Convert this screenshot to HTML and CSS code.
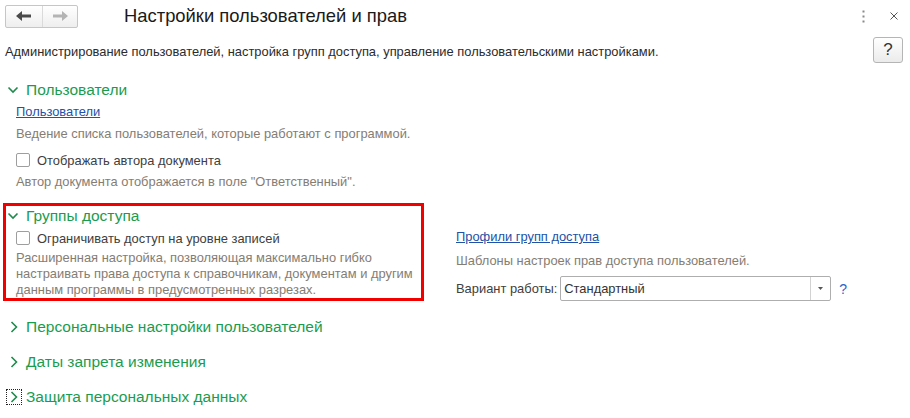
FILE: index.html
```html
<!DOCTYPE html>
<html lang="ru">
<head>
<meta charset="utf-8">
<title>Настройки пользователей и прав</title>
<link rel="stylesheet" href="styles.css">
</head>
<body>
<header class="topbar">
  <div class="nav">
    <button class="nav-btn back" type="button" aria-label="Назад">
      <svg width="16" height="10" viewBox="0 0 16 10"><path d="M0 5 L6 0 L6 3.5 L15 3.5 L15 6.5 L6 6.5 L6 10 Z" fill="#4a4a4a"/></svg>
    </button>
    <button class="nav-btn fwd" type="button" aria-label="Вперёд">
      <svg width="16" height="10" viewBox="0 0 16 10"><path d="M16 5 L10 0 L10 3.5 L1 3.5 L1 6.5 L10 6.5 L10 10 Z" fill="#b4b4b4"/></svg>
    </button>
  </div>
  <h1 class="title">Настройки пользователей и прав</h1>
  <div class="win-actions">
    <svg class="more" width="3" height="13" viewBox="0 0 3 13"><rect x="0.5" y="0.5" width="2" height="2" fill="#8a8a8a"/><rect x="0.5" y="5.5" width="2" height="2" fill="#8a8a8a"/><rect x="0.5" y="10.5" width="2" height="2" fill="#8a8a8a"/></svg>
    <svg class="close" width="8" height="8" viewBox="0 0 8 8"><path d="M0.5 0.5 L7.5 7.5 M7.5 0.5 L0.5 7.5" stroke="#555" stroke-width="1"/></svg>
  </div>
</header>

<div class="intro">
  <p class="intro-text">Администрирование пользователей, настройка групп доступа, управление пользовательскими настройками.</p>
  <button class="help" type="button">?</button>
</div>

<section class="group users">
  <div class="group-head">
    <span class="chev"><svg width="16" height="16" viewBox="0 0 16 16"><polyline points="2.5,5.5 7,10 11.5,5.5" fill="none" stroke="#1f8a4c" stroke-width="1.6"/></svg></span>
    <span>Пользователи</span>
  </div>
  <div class="group-body">
    <a class="link" href="#">Пользователи</a>
    <p class="note">Ведение списка пользователей, которые работают с программой.</p>
    <label class="check"><span class="box"></span>Отображать автора документа</label>
    <p class="note note-tight">Автор документа отображается в поле "Ответственный".</p>
  </div>
</section>

<section class="group access">
  <div class="access-main">
    <div class="group-head">
      <span class="chev"><svg width="16" height="16" viewBox="0 0 16 16"><polyline points="2.5,5.5 7,10 11.5,5.5" fill="none" stroke="#1f8a4c" stroke-width="1.6"/></svg></span>
      <span>Группы доступа</span>
    </div>
    <label class="check"><span class="box"></span>Ограничивать доступ на уровне записей</label>
    <p class="desc">Расширенная настройка, позволяющая максимально гибко<br>настраивать права доступа к справочникам, документам и другим<br>данным программы в предусмотренных разрезах.</p>
  </div>
  <div class="access-side">
    <a class="link" href="#">Профили групп доступа</a>
    <p class="note side-note">Шаблоны настроек прав доступа пользователей.</p>
    <div class="mode">
      <span class="mode-label">Вариант работы:</span>
      <div class="select">
        <span class="select-value">Стандартный</span>
        <span class="select-btn"><svg width="5" height="3" viewBox="0 0 5 3"><path d="M0 0 L5 0 L2.5 3 Z" fill="#555"/></svg></span>
      </div>
      <span class="mode-help">?</span>
    </div>
  </div>
</section>

<section class="group collapsed first">
  <div class="group-head">
    <span class="chev"><svg width="16" height="16" viewBox="0 0 16 16"><polyline points="5.5,3 10.5,8 5.5,13" fill="none" stroke="#1f8a4c" stroke-width="1.6"/></svg></span>
    <span>Персональные настройки пользователей</span>
  </div>
</section>

<section class="group collapsed">
  <div class="group-head">
    <span class="chev"><svg width="16" height="16" viewBox="0 0 16 16"><polyline points="5.5,3 10.5,8 5.5,13" fill="none" stroke="#1f8a4c" stroke-width="1.6"/></svg></span>
    <span>Даты запрета изменения</span>
  </div>
</section>

<section class="group collapsed">
  <div class="group-head">
    <span class="chev focused"><svg width="16" height="16" viewBox="0 0 16 16"><polyline points="5.5,3 10.5,8 5.5,13" fill="none" stroke="#1f8a4c" stroke-width="1.6"/></svg></span>
    <span>Защита персональных данных</span>
  </div>
</section>
</body>
</html>
```

FILE: styles.css
```css
* { box-sizing: border-box; }

body {
  margin: 0;
  font-family: "Liberation Sans", Arial, sans-serif;
  font-size: 12.9px;
  color: #333;
  background: #fff;
}

.topbar {
  display: flex;
  align-items: center;
  height: 32px;
  padding: 0 12px 0 5px;
}

.nav {
  display: flex;
  width: 73px;
  height: 23px;
  border: 1px solid #c6c6c6;
  border-radius: 2px;
  background: linear-gradient(#ffffff, #eeeeee);
}

.nav-btn {
  display: flex;
  align-items: center;
  justify-content: center;
  height: 100%;
  padding: 0;
  border: 0;
  background: transparent;
}

.nav-btn.back {
  width: 37px;
  border-right: 1px solid #dadada;
}

.nav-btn.fwd { flex: 1; }

.title {
  margin: 0 0 0 46px;
  font-size: 18.4px;
  font-weight: normal;
  line-height: 22px;
  color: #1a1a1a;
}

.win-actions {
  display: flex;
  align-items: center;
  gap: 25px;
  margin-left: auto;
}

.intro {
  display: flex;
  align-items: center;
  justify-content: space-between;
  height: 26px;
  margin-top: 5px;
  padding: 0 7px 0 5px;
}

.intro-text {
  margin: 2px 0 0;
  color: #2b2b2b;
}

.help {
  width: 30px;
  height: 26px;
  padding: 0;
  border: 1px solid #b5b5b5;
  border-radius: 3px;
  background: linear-gradient(#ffffff, #ebebeb);
  font-family: "Liberation Sans", Arial, sans-serif;
  font-size: 17px;
  color: #333;
}

.group-head {
  display: flex;
  align-items: center;
  height: 20px;
  padding-left: 6px;
  font-size: 15.5px;
  color: #1a9c4f;
}

.chev {
  display: flex;
  width: 16px;
  height: 16px;
  margin-right: 4px;
  flex: none;
}

.chev.focused { outline: 1px dotted #222; outline-offset: -1px; }

.users { margin-top: 17px; }

.group-body { padding-left: 16px; }

.link {
  display: block;
  width: fit-content;
  margin-top: 3px;
  line-height: 18px;
  color: #2152a8;
  text-decoration: underline;
}

.note {
  margin: 4px 0 0;
  line-height: 18px;
  color: #857d73;
}

.note-tight { margin-top: 3px; }

.check {
  display: flex;
  align-items: center;
  gap: 7px;
  height: 20px;
  margin-top: 7px;
  color: #404040;
}

.box {
  width: 14px;
  height: 14px;
  border: 1px solid #9e9e9e;
  border-radius: 2px;
  background: #fff;
  flex: none;
}

.access {
  display: flex;
  margin-top: 12px;
}

.access-main {
  width: 421px;
  margin-left: 3px;
  border: 3px solid #f20000;
}

.access-main .group-head { padding-left: 0; }

.access-main .check {
  margin-top: 2px;
  padding-left: 10px;
}

.desc {
  margin: 2px 0 0;
  padding-left: 10px;
  line-height: 16px;
  color: #857d73;
}

.access-side {
  margin-left: 32px;
  padding-top: 25px;
}

.access-side .link { margin-top: 0; }

.side-note { margin-top: 6px; }

.mode {
  display: flex;
  align-items: center;
  gap: 3px;
  margin-top: 6px;
}

.mode-label { color: #404040; }

.select {
  display: flex;
  width: 271px;
  height: 25px;
  border: 1px solid #aeaeae;
  border-radius: 2px;
  background: #fff;
}

.select-value {
  flex: 1;
  padding-left: 3px;
  line-height: 23px;
  color: #333;
}

.select-btn {
  display: flex;
  align-items: center;
  justify-content: center;
  width: 20px;
  border-left: 1px solid #d2d2d2;
}

.mode-help {
  margin-left: 5px;
  font-size: 14px;
  color: #2a66c8;
}

.collapsed { margin-top: 15px; }
.collapsed.first { margin-top: 16px; }
```
